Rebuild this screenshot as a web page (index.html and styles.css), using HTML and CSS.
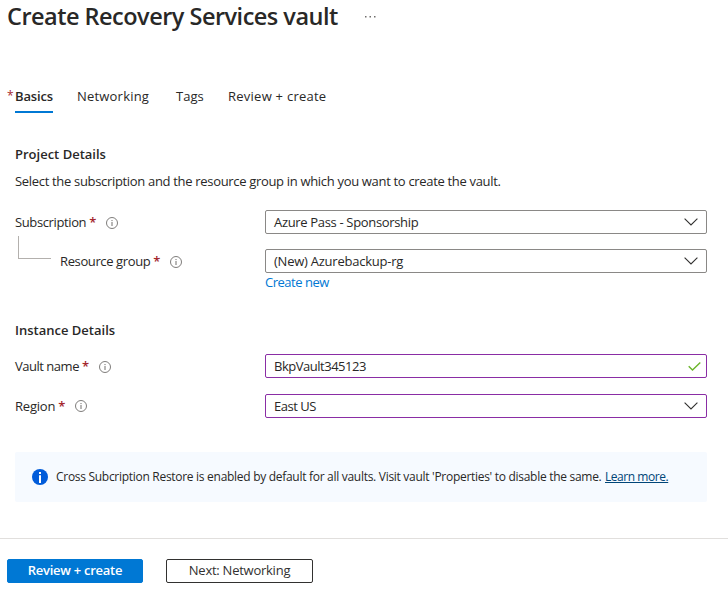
FILE: index.html
```html
<!DOCTYPE html>
<html lang="en">
<head>
<meta charset="utf-8">
<title>Create Recovery Services vault</title>
<link rel="stylesheet" href="styles.css">
</head>
<body>
<svg class="defs" width="0" height="0" aria-hidden="true">
  <symbol id="info" viewBox="0 0 12 12"><circle cx="6" cy="6" r="5.5" fill="none" stroke="#706e6c" stroke-width=".9"/><path d="M6 5v4M6 3v1.1" stroke="#706e6c" stroke-width="1"/></symbol>
  <symbol id="chevron" viewBox="0 0 14 8"><path d="M.6.7 7 7 13.4.7" fill="none" stroke="#323130" stroke-width="1.1"/></symbol>
</svg>
<header class="title-bar">
  <h1 class="title">Create Recovery Services vault</h1>
  <svg class="more" width="12" height="2" viewBox="0 0 12 2"><path d="M1 0h1.5v1.5H1zM5.5 0H7v1.5H5.5zM10 0h1.5v1.5H10z" fill="#706e6c"/></svg>
</header>
<nav class="tabs">
  <span class="tab-star">*</span>
  <a class="tab active">Basics</a>
  <a class="tab networking">Networking</a>
  <a class="tab tags">Tags</a>
  <a class="tab review">Review + create</a>
</nav>
<main class="form">
  <h2 class="heading project">Project Details</h2>
  <p class="intro">Select the subscription and the resource group in which you want to create the vault.</p>
  <div class="row subscription">
    <label class="label"><span class="t-sub">Subscription</span><b class="star">*</b><svg class="info"><use href="#info"/></svg></label>
    <div class="field"><span class="t-azure">Azure Pass - Sponsorship</span><svg class="chevron"><use href="#chevron"/></svg></div>
  </div>
  <div class="row group">
    <label class="label"><i class="elbow"></i><span class="t-group">Resource group</span><b class="star">*</b><svg class="info"><use href="#info"/></svg></label>
    <div class="field"><span class="t-new">(New) Azurebackup-rg</span><svg class="chevron"><use href="#chevron"/></svg></div>
  </div>
  <a class="create-new">Create new</a>
  <h2 class="heading instance">Instance Details</h2>
  <div class="row vault">
    <label class="label"><span class="t-vault">Vault name</span><b class="star">*</b><svg class="info"><use href="#info"/></svg></label>
    <div class="field edited"><span class="t-bkp">BkpVault345123</span><svg class="check" viewBox="0 0 13 9"><path d="M.7 4.3 4.5 8 12.3.6" fill="none" stroke="#6bb52b" stroke-width="1.4"/></svg></div>
  </div>
  <div class="row region">
    <label class="label"><span class="t-region">Region</span><b class="star">*</b><svg class="info"><use href="#info"/></svg></label>
    <div class="field edited"><span class="t-east">East US</span><svg class="chevron"><use href="#chevron"/></svg></div>
  </div>
  <div class="banner">
    <svg class="banner-icon" viewBox="0 0 16 16"><circle cx="8" cy="8" r="8" fill="#015cda"/><path d="M7 6.3h2V14H7zM7 3h2v2H7z" fill="#fff"/></svg>
    <span class="notice">Cross Subcription Restore is enabled by default for all vaults. Visit vault 'Properties' to disable the same.</span>
    <a class="learn">Learn more.</a>
  </div>
</main>
<footer class="footer">
  <button class="btn primary">Review + create</button>
  <button class="btn secondary">Next: Networking</button>
</footer>
</body>
</html>
```
FILE: styles.css
```css
* { box-sizing: border-box; }
body { margin: 0; width: 728px; height: 594px; overflow: hidden; background: #fff; color: #292827; font: 13px/20px "Open Sans", "Noto Sans", sans-serif; white-space: nowrap; }
h1, h2, p { margin: 0; }
.defs { position: absolute; }
.title-bar { display: flex; align-items: center; height: 34px; padding-left: 7px; }
.title { width: 357px; font-size: 23.5px; line-height: 34px; font-weight: 600; letter-spacing: -.51px; margin-top: -2px; }
.tabs { display: flex; height: 79px; padding: 52px 0 0 7px; }
.tab-star { width: 8px; font-size: 12px; line-height: 19px; color: #a4262c; }
.tab { height: 27px; }
.active { width: 38px; font-weight: 600; letter-spacing: -.15px; border-bottom: 2px solid #0078d4; }
.networking { width: 99px; padding-left: 24px; letter-spacing: .2px; }
.tags { width: 52px; padding-left: 24px; }
.review { padding-left: 24px; letter-spacing: .25px; }
.form { padding: 31px 21px 0 15px; }
.heading { font-size: 13px; line-height: 20px; font-weight: 600; }
.intro { margin-top: 7px; letter-spacing: -.32px; }
.row { display: flex; height: 24px; }
.label { display: flex; align-items: center; width: 250px; }
.star { margin: 0 1px 0 3px; width: 7px; font-size: 13px; font-weight: 600; color: #a4262c; }
.info { width: 12px; height: 12px; margin: 1px 0 0 9px; }
.field { display: flex; align-items: center; justify-content: space-between; flex: 1; padding: 0 8px; border: 1px solid #8a8886; border-radius: 2px; }
.edited { border-color: #8a2da5; }
.chevron { width: 14px; height: 8px; }
.check { width: 13px; height: 9px; margin-right: -3px; }
.t-sub, .t-group { letter-spacing: -.38px; }
.t-azure { letter-spacing: -.33px; }
.t-new { letter-spacing: -.24px; }
.t-vault, .t-bkp { letter-spacing: -.48px; }
.t-region { letter-spacing: -.2px; }
.t-east { letter-spacing: -.5px; }
.subscription { margin-top: 19px; }
.group { margin-top: 15px; }
.elbow { width: 33px; height: 23px; margin: -28px 9px 0 3px; border: solid #b3b0ad; border-width: 0 0 1px 1px; }
.create-new { display: block; margin: -1px 0 0 250px; letter-spacing: -.48px; color: #0078d4; }
.instance { margin-top: 28px; }
.vault { margin-top: 14px; }
.region { margin-top: 16px; }
.region .info { margin-top: 0; }
.banner { display: flex; align-items: center; height: 50px; margin-top: 34px; padding-left: 17px; border-radius: 2px; background: #f6faff; font-size: 12px; }
.banner-icon { width: 16px; height: 16px; margin-right: 8px; }
.notice { width: 549px; letter-spacing: -.29px; }
.learn { letter-spacing: -.45px; color: #004578; text-decoration: underline; }
.footer { display: flex; gap: 23px; height: 56px; margin-top: 36px; padding: 20px 7px 0; border-top: 1px solid #e1dfdd; }
.btn { height: 24px; padding: 0 0 2px; border-radius: 2px; font: 600 13px/20px "Open Sans", "Noto Sans", sans-serif; }
.primary { width: 136px; border: 1px solid #0078d4; background: #0078d4; color: #fff; letter-spacing: -.27px; }
.secondary { width: 147px; border: 1px solid #323130; background: #fff; color: #323130; font-weight: 500; letter-spacing: -.25px; }
```
